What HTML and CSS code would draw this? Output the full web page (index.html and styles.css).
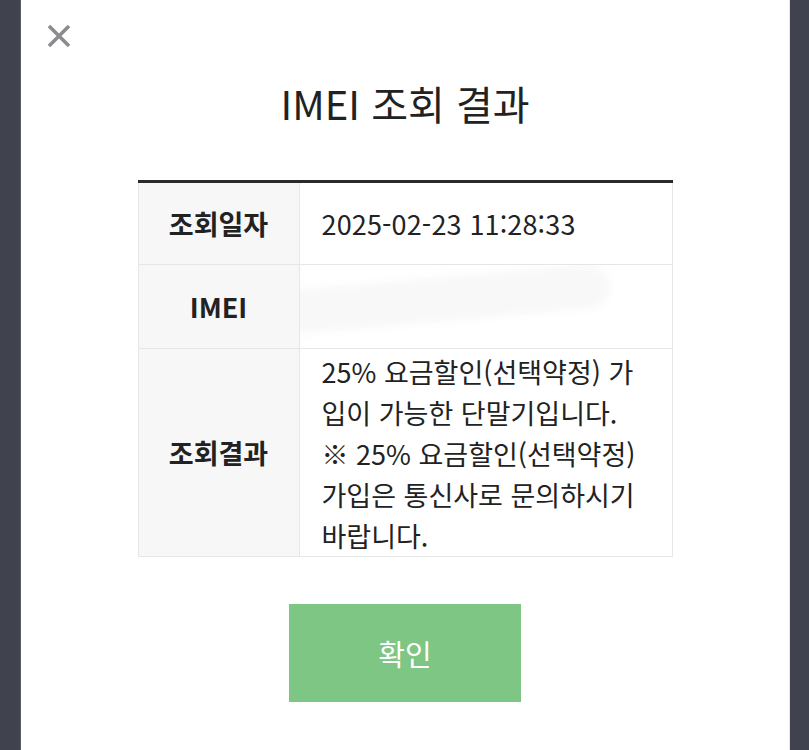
FILE: index.html
```html
<!DOCTYPE html>
<html lang="ko">
<head>
<meta charset="utf-8">
<link rel="stylesheet" href="styles.css">
</head>
<body>
<div class="screen">
  <div class="modal">
    <div class="top">
      <button class="close" aria-label="닫기">
        <svg width="24" height="24" viewBox="0 0 24 24"><path d="M2 2 L22 22 M22 2 L2 22" stroke="#8b8b90" stroke-width="3.6" stroke-linecap="butt"/></svg>
      </button>
    </div>
    <h1 class="title">IMEI 조회 결과</h1>
    <table class="result">
      <tr class="r1">
        <th>조회일자</th>
        <td class="date">2025-02-23 11:28:33</td>
      </tr>
      <tr class="r2">
        <th>IMEI</th>
        <td class="masked"><span class="smear"></span></td>
      </tr>
      <tr class="r3">
        <th>조회결과</th>
        <td class="multi">25% 요금할인(선택약정) 가입이 가능한 단말기입니다.<br>※ 25% 요금할인(선택약정) 가입은 통신사로 문의하시기 바랍니다.</td>
      </tr>
    </table>
    <div class="actions">
      <button class="ok">확인</button>
    </div>
  </div>
</div>
</body>
</html>
```
FILE: styles.css
```css
html, body {
  margin: 0;
  padding: 0;
  height: 100%;
}
body {
  background: #40434d;
  font-family: "Noto Sans CJK KR", "Noto Sans", sans-serif;
  color: #222;
  overflow: hidden;
}
.screen {
  display: flex;
  justify-content: flex-start;
  height: 750px;
  padding-left: 21px;
}
.modal {
  width: 768px;
  height: 750px;
  background: #fff;
  box-shadow: -1px 0 0 #5c5f68, 1px 0 0 #e8e8e8;
  display: flex;
  flex-direction: column;
  align-items: center;
}
.top {
  align-self: stretch;
  height: 24px;
  padding: 24px 0 0 26px;
}
.close {
  display: block;
  padding: 0;
  margin: 0;
  border: 0;
  background: none;
  width: 24px;
  height: 24px;
}
.close svg { display: block; }
.title {
  margin: 25px 0 0;
  font-size: 40px;
  font-weight: 400;
  line-height: 60px;
  letter-spacing: 0;
  color: #222;
}
.result {
  margin-top: 47px;
  width: 535px;
  border-collapse: collapse;
  border-top: 3px solid #2b2b2b;
  font-size: 27px;
}
.result th, .result td {
  border: 1px solid #e6e6e6;
  border-top: 0;
}
.result tr + tr th, .result tr + tr td {
  border-top: 1px solid #e6e6e6;
}
.result th {
  width: 160px;
  background: #f7f7f7;
  font-weight: 700;
  color: #222;
  padding: 0;
  text-align: center;
}
.result td {
  background: #fff;
  padding: 0 14px 0 22px;
  color: #222;
}
.date { letter-spacing: 0.15px; }
.r1 th, .r1 td { height: 81px; }
.r2 th, .r2 td { height: 83px; }
.masked {
  position: relative;
  overflow: hidden;
}
.smear {
  position: absolute;
  left: -20px;
  top: 12px;
  width: 330px;
  height: 44px;
  background: #f8f8f8;
  border-radius: 30px;
  transform: rotate(-5deg);
  filter: blur(4px);
}
.multi {
  line-height: 41px;
  padding-top: 2px !important;
  padding-bottom: 0 !important;
  height: 203px;
  vertical-align: top;
  word-break: break-all;
}
.actions {
  margin-top: 47px;
}
.ok {
  width: 232px;
  height: 98px;
  background: #7dc683;
  border: 0;
  color: #fff;
  font-family: "Noto Sans CJK KR", "Noto Sans", sans-serif;
  font-size: 29px;
  font-weight: 400;
  padding: 0;
}
```
